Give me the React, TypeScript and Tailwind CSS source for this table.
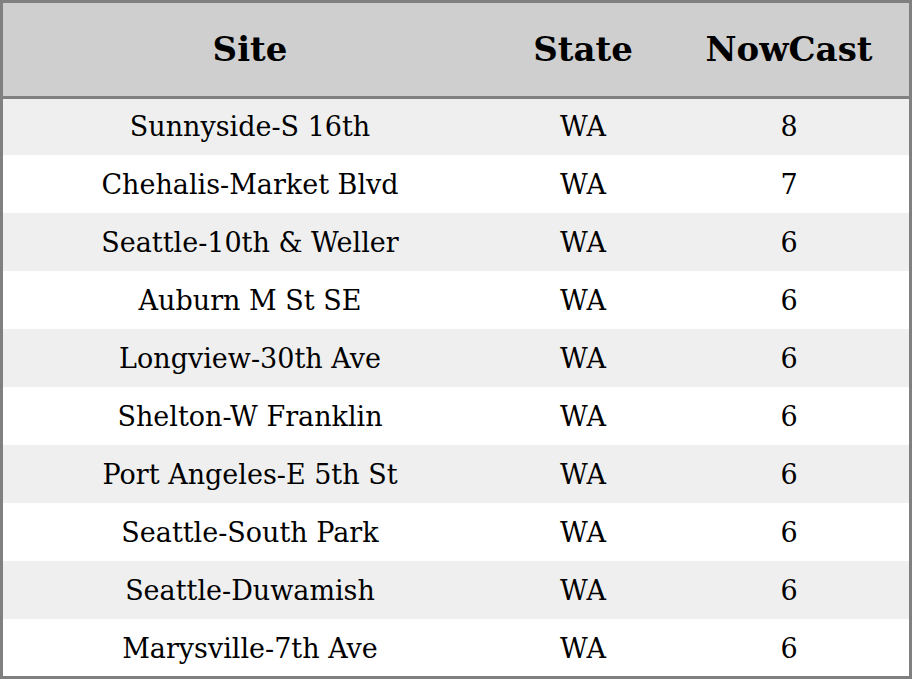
const rows = [
  ['Sunnyside-S 16th', 'WA', '8'],
  ['Chehalis-Market Blvd', 'WA', '7'],
  ['Seattle-10th & Weller', 'WA', '6'],
  ['Auburn M St SE', 'WA', '6'],
  ['Longview-30th Ave', 'WA', '6'],
  ['Shelton-W Franklin', 'WA', '6'],
  ['Port Angeles-E 5th St', 'WA', '6'],
  ['Seattle-South Park', 'WA', '6'],
  ['Seattle-Duwamish', 'WA', '6'],
  ['Marysville-7th Ave', 'WA', '6'],
];

export default function App() {
  return (
    <div className="h-[679px] w-[912px] overflow-hidden border-[3px] border-[#808080] bg-white font-['DejaVu_Serif',serif] text-black">
      <div className="grid h-[96px] grid-cols-[494px_172px_1fr] items-center border-b-[3px] border-[#808080] bg-[#cfcfcf] text-[34px] font-bold">
        <div className="text-center">Site</div>
        <div className="text-center">State</div>
        <div className="text-center">NowCast</div>
      </div>
      {rows.map((r, i) => (
        <div
          key={i}
          className={
            'grid grid-cols-[494px_172px_1fr] items-center text-[27px] ' +
            (i === 0 ? 'h-[56px] ' : 'h-[58px] pt-[2px] ') +
            (i % 2 === 0 ? 'bg-[#efefef]' : 'bg-white')
          }
        >
          <div className="text-center">{r[0]}</div>
          <div className="text-center">{r[1]}</div>
          <div className="text-center">{r[2]}</div>
        </div>
      ))}
    </div>
  );
}
